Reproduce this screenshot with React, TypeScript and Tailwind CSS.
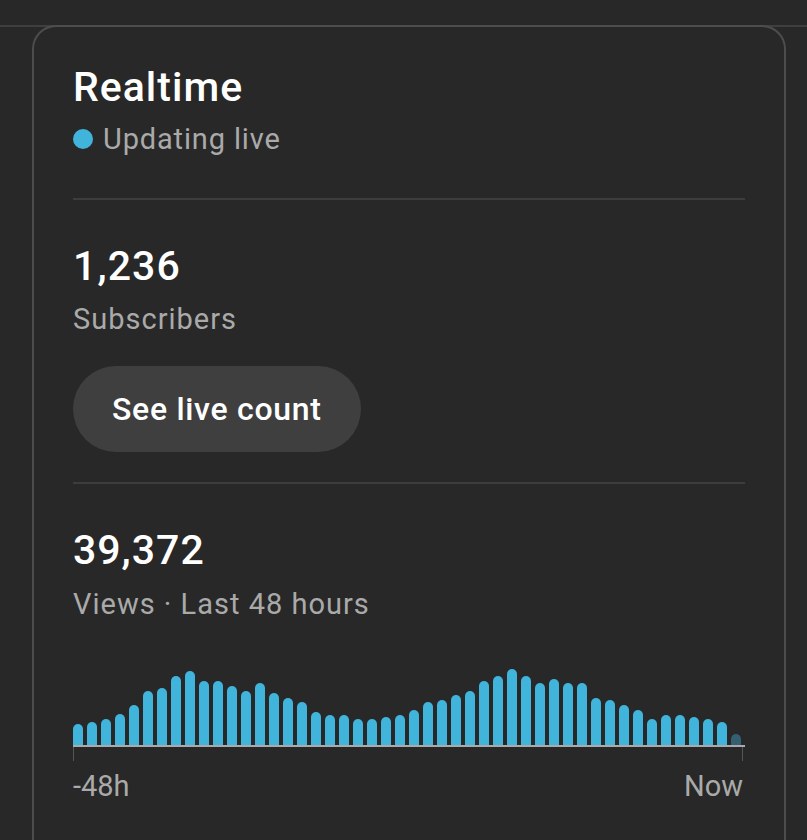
import React from 'react';

const bars = [
  20.7, 23.3, 25.7, 30.7, 40, 54.3, 56.7, 68.7, 73.7, 64, 64, 59, 54.3, 61.7, 52, 47.3,
  42.7, 32.7, 30.3, 30.3, 25.7, 25.7, 28, 30.3, 35.3, 42.7, 45, 49.7, 54.3, 64, 68.7, 76,
  68.7, 61.7, 66.3, 61.7, 61.7, 47.3, 45, 40, 35.3, 25.7, 30.3, 30.3, 28, 25.7, 23.3, 11.3,
];

const Divider = () => <div className="h-[2px] w-full bg-[#3d3d3d]" />;

const App: React.FC = () => {
  return (
    <div className="h-[840px] w-full overflow-hidden bg-[#282828] font-['Roboto',sans-serif]">
      <div className="h-[27px] border-b-2 border-[#3f3f3f]" />
      <div className="-mt-[2px] ml-[32px] mr-[21px] h-[830px] rounded-t-[24px] border-2 border-b-0 border-[#4d4d4d] px-[39px] pt-[32px]">
        <h2 className="text-[41px] font-medium leading-[56px] tracking-[1px] text-white">Realtime</h2>
        <div className="mt-[6px] flex items-center gap-[10px]">
          <span className="h-[20px] w-[20px] rounded-full bg-[#41b4dc]" />
          <span className="text-[29px] leading-[36px] tracking-[0.85px] text-[#aaaaaa]">Updating live</span>
        </div>

        <div className="mt-[41px]">
          <Divider />
        </div>

        <div className="mt-[38px] text-[41px] font-medium leading-[56px] tracking-[1.1px] text-white">1,236</div>
        <div className="mt-[5px] text-[29px] leading-[40px] tracking-[1px] text-[#aaaaaa]">Subscribers</div>
        <button className="mt-[27px] h-[86px] rounded-full bg-[#3f3f3f] px-[39px] text-[32px] font-medium tracking-[0.7px] text-white">
          See live count
        </button>

        <div className="mt-[30px]">
          <Divider />
        </div>

        <div className="mt-[38px] text-[41px] font-medium leading-[56px] tracking-[1px] text-white">39,372</div>
        <div className="mt-[6px] text-[29px] leading-[40px] tracking-[1px] text-[#aaaaaa]">Views · Last 48 hours</div>

        <div className="mt-[35px]">
          <div className="flex h-[86px] items-end gap-[4px]">
            {bars.map((h, i) => (
              <div
                key={i}
                className={`w-[10px] rounded-t-full ${i === bars.length - 1 ? 'bg-[#345f71]' : 'bg-[#41b4dc]'}`}
                style={{ height: `${h}px` }}
              />
            ))}
          </div>
          <div className="h-[2px] w-full bg-[#aaaaaa]" />
          <div className="flex justify-between">
            <div className="h-[14px] w-[1px] bg-[#555555]" />
            <div className="mr-[2px] h-[14px] w-[1px] bg-[#555555]" />
          </div>
          <div className="mt-[5px] flex justify-between text-[29px] leading-[40px] text-[#aaaaaa]">
            <span>-48h</span>
            <span className="mr-[2px]">Now</span>
          </div>
        </div>
      </div>
    </div>
  );
};

export default App;
